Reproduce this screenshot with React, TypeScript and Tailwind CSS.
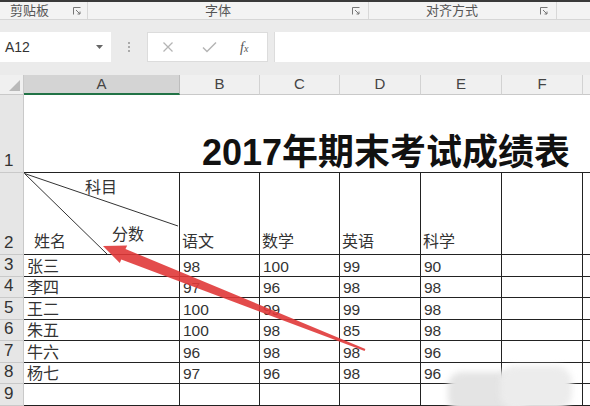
import React from 'react';

const cols = [
  { key: 'A', w: 'w-[156px]' },
  { key: 'B', w: 'w-[80px]' },
  { key: 'C', w: 'w-[80px]' },
  { key: 'D', w: 'w-[81px]' },
  { key: 'E', w: 'w-[81px]' },
  { key: 'F', w: 'w-[81px]' },
];

const scores = [
  ['张三', '98', '100', '99', '90'],
  ['李四', '97', '96', '98', '98'],
  ['王二', '100', '99', '99', '98'],
  ['朱五', '100', '98', '85', '98'],
  ['牛六', '96', '98', '98', '96'],
  ['杨七', '97', '96', '98', '96'],
  ['', '', '', '', ''],
];

const subjects = ['语文', '数学', '英语', '科学', ''];

function Launcher() {
  return (
    <svg width="8" height="8" viewBox="0 0 8 8" className="text-[#777]">
      <path d="M0.5 7.5V0.5H7.5" fill="none" stroke="currentColor" strokeWidth="1" />
      <path d="M3 3L7 7M7 4.5V7H4.5" fill="none" stroke="currentColor" strokeWidth="1" />
    </svg>
  );
}

function RowHead({ n, h }: { n: number; h: string }) {
  return (
    <div className={`${h} w-[24px] shrink-0 flex items-end bg-[#e6e6e6] border-b border-r border-[#c9c9c9] pl-[4px] pb-[1px] text-[17px] leading-[1.15] text-[#333]`}>
      {n}
    </div>
  );
}

export default function App() {
  return (
    <div className="relative w-[590px] h-[406px] overflow-hidden bg-[#ebebeb] font-['Liberation_Sans','Noto_Sans_CJK_SC',sans-serif] text-[#222]">
      {/* Ribbon group labels */}
      <div className="h-[2px] bg-[#3a3a3a]" />
      <div className="h-[18px] flex bg-[#f3f3f3] border-b border-[#d6d6d6] text-[13px] leading-[17px] text-[#555]">
        <div className="w-[88px] flex items-center border-r border-[#d8d8d8] pl-[10px] pr-[6px]">
          <span>剪贴板</span>
          <span className="ml-auto flex"><Launcher /></span>
        </div>
        <div className="w-[281px] flex items-center border-r border-[#d8d8d8] pr-[8px]">
          <span className="ml-[117px]">字体</span>
          <span className="ml-auto flex"><Launcher /></span>
        </div>
        <div className="w-[188px] flex items-center border-r border-[#d8d8d8] pr-[8px]">
          <span className="ml-[57px]">对齐方式</span>
          <span className="ml-auto flex"><Launcher /></span>
        </div>
        <div className="flex-1" />
      </div>

      {/* Formula bar */}
      <div className="h-[12px]" />
      <div className="h-[30px] flex items-stretch">
        <div className="w-[111px] bg-white flex items-center pl-[5px] pr-[8px] text-[14px] text-[#333]">
          <span>A12</span>
          <svg width="7" height="4" viewBox="0 0 7 4" className="ml-auto">
            <path d="M0 0H7L3.5 4Z" fill="#666" />
          </svg>
        </div>
        <div className="w-[36px] flex items-center justify-center">
          <div className="flex flex-col gap-[2px]">
            <span className="w-[2px] h-[2px] bg-[#aaa]" />
            <span className="w-[2px] h-[2px] bg-[#aaa]" />
            <span className="w-[2px] h-[2px] bg-[#aaa]" />
          </div>
        </div>
        <div className="w-[121px] bg-white border border-[#dcdcdc] flex items-center">
          <svg width="12" height="12" viewBox="0 0 12 12" className="ml-[14px]">
            <path d="M1.5 1.5L10.5 10.5M10.5 1.5L1.5 10.5" stroke="#b5b5b5" strokeWidth="1.3" />
          </svg>
          <svg width="15" height="12" viewBox="0 0 15 12" className="ml-[28px]">
            <path d="M1 6.5L5 10.5L14 1.5" fill="none" stroke="#b5b5b5" strokeWidth="1.5" />
          </svg>
          <span className="ml-[23px] text-[14px] italic font-['Liberation_Serif',serif] text-[#555]">
            f<span className="text-[10px]">x</span>
          </span>
        </div>
        <div className="w-[6px]" />
        <div className="flex-1 bg-white border-l border-[#dcdcdc]" />
      </div>
      <div className="h-[13px]" />

      {/* Column headers */}
      <div className="h-[20px] flex bg-[#f0f0f0] text-[15px] text-[#444]">
        <div className="w-[24px] shrink-0 flex items-end justify-end pr-[3px] pb-[3px] border-r border-b border-[#c9c9c9]">
          <svg width="11" height="11" viewBox="0 0 11 11">
            <path d="M11 0V11H0Z" fill="#b9b9b9" />
          </svg>
        </div>
        {cols.map(c => (
          <div
            key={c.key}
            className={`${c.w} shrink-0 flex items-center justify-center border-r ${
              c.key === 'A'
                ? 'bg-[#d4d4d4] border-b-2 border-b-[#217346] border-r-[#bdbdbd]'
                : 'border-b border-b-[#c9c9c9] border-r-[#d2d2d2]'
            }`}
          >
            {c.key}
          </div>
        ))}
        <div className="flex-1 border-b border-[#c9c9c9]" />
      </div>

      {/* Sheet */}
      <div className="bg-white">
        {/* Row 1: merged title */}
        <div className="flex">
          <RowHead n={1} h="h-[78px]" />
          <div className="flex-1 h-[78px] flex items-end pl-[178px] border-b border-[#222]">
            <span className="text-[36px] font-bold leading-none pb-[1px] text-[#111]">2017年期末考试成绩表</span>
          </div>
        </div>

        {/* Row 2: headers */}
        <div className="flex">
          <RowHead n={2} h="h-[82px]" />
          <div className="relative w-[156px] h-[82px] shrink-0 border-r border-b border-[#222] flex flex-col text-[16px] text-[#333]">
            <svg className="absolute inset-0" width="155" height="81" viewBox="0 0 155 81">
              <path d="M0.5 0.5L154 53" stroke="#333" strokeWidth="1" />
              <path d="M0.5 0.5L83 81" stroke="#333" strokeWidth="1" />
            </svg>
            <span className="ml-[61px] mt-[3px]">科目</span>
            <div className="mt-auto flex items-end">
              <span className="ml-[10px]">姓名</span>
              <span className="ml-[46px] mb-[7px]">分数</span>
            </div>
          </div>
          {subjects.map((s, i) => (
            <div
              key={i}
              className={`${cols[i + 1].w} h-[82px] shrink-0 flex items-end pl-[2px] border-r border-b border-[#222] text-[16px] text-[#333]`}
            >
              {s}
            </div>
          ))}
          <div className="flex-1 h-[82px] border-b border-[#222]" />
        </div>

        {/* Rows 3-9 */}
        {scores.map((r, ri) => (
          <div key={ri} className="flex">
            <RowHead n={ri + 3} h="h-[21.5px]" />
            {r.map((v, ci) => (
              <div
                key={ci}
                className={`${cols[ci].w} h-[21.5px] shrink-0 flex items-end pl-[3px] border-r border-b border-[#222] ${ci === 0 ? 'text-[16px]' : 'text-[15.5px]'} leading-[19px] text-[#333]`}
              >
                {v}
              </div>
            ))}
            <div className={`${cols[5].w} h-[21.5px] shrink-0 border-r border-b border-[#222]`} />
            <div className="flex-1 h-[21.5px] border-b border-[#222]" />
          </div>
        ))}
      </div>

      {/* Red arrow annotation */}
      <svg className="absolute left-0 top-0 pointer-events-none" width="590" height="406" viewBox="0 0 590 406">
        <polygon
          points="103,246 119.8,263 121.3,259.4 364.6,351.1 365.4,348.9 125.5,249 127.2,245.5"
          fill="#e03838"
          fillOpacity="0.9"
        />
      </svg>

      {/* Blurred watermark */}
      <div className="absolute left-[448px] top-[372px] w-[80px] h-[40px] rounded-[14px] bg-[#e4e4e4] blur-[3px]" />
      <div className="absolute left-[500px] top-[366px] w-[72px] h-[44px] rounded-[16px] bg-[#ececec] blur-[3px]" />
    </div>
  );
}
